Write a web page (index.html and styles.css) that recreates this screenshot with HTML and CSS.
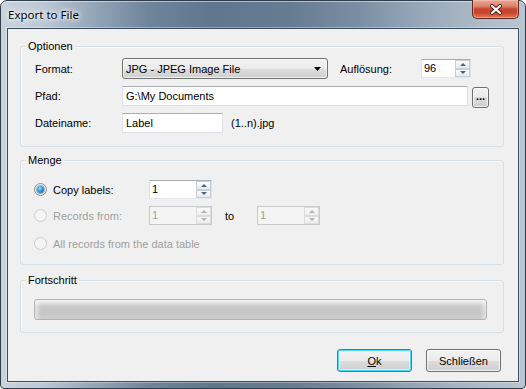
FILE: index.html
```html
<!DOCTYPE html>
<html lang="de">
<head>
    <meta charset="UTF-8">
    <title>Export to File</title>
    <link rel="stylesheet" href="styles.css">
</head>
<body>
    <div class="window">
        <div class="titlebar">
            <span class="title">Export to File</span>
            <div class="close-btn">
                <svg width="14" height="11" viewBox="0 0 14 11">
                    <path d="M3 2 L11 9 M11 2 L3 9" stroke="#5a1c12" stroke-width="4" stroke-linecap="round"/>
                    <path d="M3 2 L11 9 M11 2 L3 9" stroke="#ffffff" stroke-width="2.2" stroke-linecap="round"/>
                </svg>
            </div>
        </div>

        <div class="client">
            <!-- Optionen -->
            <div class="group group-options">
                <div class="group-title">Optionen</div>
                <div class="row row-format">
                    <span class="label">Format:</span>
                    <div class="combo">
                        <span>JPG - JPEG Image File</span>
                        <svg width="7" height="4" viewBox="0 0 7 4"><polygon points="0,0 7,0 3.5,4" fill="#000"/></svg>
                    </div>
                    <span class="label label-res">Auflösung:</span>
                    <div class="spin spin-res">
                        <span class="spin-value">96</span>
                        <div class="spin-buttons">
                            <span class="spin-btn up"></span>
                            <span class="spin-btn down"></span>
                        </div>
                    </div>
                </div>
                <div class="row row-path">
                    <span class="label">Pfad:</span>
                    <div class="textbox path-box">G:\My Documents</div>
                    <div class="browse-btn">...</div>
                </div>
                <div class="row row-name">
                    <span class="label">Dateiname:</span>
                    <div class="textbox name-box">Label</div>
                    <span class="suffix">(1..n).jpg</span>
                </div>
            </div>

            <!-- Menge -->
            <div class="group group-amount">
                <div class="group-title">Menge</div>
                <div class="row row-radio row-copy">
                    <label class="radio-label">
                        <span class="radio checked"></span>
                        <span>Copy labels:</span>
                    </label>
                    <div class="spin spin-count">
                        <span class="spin-value">1</span>
                        <div class="spin-buttons">
                            <span class="spin-btn up"></span>
                            <span class="spin-btn down"></span>
                        </div>
                    </div>
                </div>
                <div class="row row-radio row-records">
                    <label class="radio-label disabled">
                        <span class="radio"></span>
                        <span>Records from:</span>
                    </label>
                    <div class="spin spin-count disabled">
                        <span class="spin-value">1</span>
                        <div class="spin-buttons">
                            <span class="spin-btn up"></span>
                            <span class="spin-btn down"></span>
                        </div>
                    </div>
                    <span class="to-label">to</span>
                    <div class="spin spin-count disabled">
                        <span class="spin-value">1</span>
                        <div class="spin-buttons">
                            <span class="spin-btn up"></span>
                            <span class="spin-btn down"></span>
                        </div>
                    </div>
                </div>
                <div class="row row-radio row-all">
                    <label class="radio-label disabled">
                        <span class="radio"></span>
                        <span>All records from the data table</span>
                    </label>
                </div>
            </div>

            <!-- Fortschritt -->
            <div class="group group-progress">
                <div class="group-title">Fortschritt</div>
                <div class="progress"></div>
            </div>

            <div class="buttons">
                <button class="btn btn-default"><u>O</u>k</button>
                <button class="btn">Schließen</button>
            </div>
        </div>
    </div>
</body>
</html>
```

FILE: styles.css
```css
body {
    margin: 0;
    background: #ffffff;
    font-family: "Liberation Sans", Arial, sans-serif;
    font-size: 11px;
    color: #000;
}

.window {
    box-sizing: border-box;
    width: 526px;
    height: 389px;
    border: 1px solid #2f3c4a;
    border-radius: 7px 7px 4px 4px;
    padding: 0 6px 6px 6px;
    display: flex;
    flex-direction: column;
    background: linear-gradient(90deg, #c9d3dd 0%, #bcc8d4 8%, #9aabbd 16%, #6f859c 28%, #5f768e 40%, #667c93 55%, #7a8ea3 68%, #98a8b9 80%, #aebbc8 92%, #b9c5d1 100%);
    box-shadow: inset 0 1px 0 rgba(255, 255, 255, 0.5);
}

/* title bar */
.titlebar {
    height: 27px;
    display: flex;
    justify-content: space-between;
    align-items: flex-start;
}
.title {
    margin: 7px 0 0 1px;
    font-family: "Noto Sans", "Open Sans", sans-serif;
    font-size: 11.5px;
    line-height: 14px;
    color: #000;
    text-shadow: 0 0 6px #fff, 0 0 3px rgba(255, 255, 255, 0.9), 0 0 10px rgba(255, 255, 255, 0.8);
}
.close-btn {
    box-sizing: border-box;
    width: 47px;
    height: 19px;
    margin-top: -1px;
    border: 1px solid #5d2a22;
    border-top: none;
    border-radius: 0 0 5px 5px;
    background: linear-gradient(#e9a897 0%, #dc826c 35%, #c74430 50%, #c8442c 70%, #df7a55 100%);
    box-shadow: inset 0 0 0 1px rgba(255, 210, 200, 0.45);
    display: flex;
    align-items: center;
    justify-content: center;
}

/* client area */
.client {
    box-sizing: border-box;
    height: 354px;
    border: 1px solid #3a4c5f;
    background: #f0f0f0;
    box-shadow: 0 0 0 1px rgba(255, 255, 255, 0.35);
    display: flex;
    flex-direction: column;
}

.group {
    margin: 0 14px 0 12px;
    border: 1px solid #d5dfe5;
    border-radius: 3px;
    box-shadow: inset 1px 1px 0 #fafafa;
    padding: 0 0 0 14px;
}
.group-title {
    width: fit-content;
    height: 13px;
    line-height: 13px;
    margin: -7px 0 0 -9px;
    padding: 0 2px;
    background: #f0f0f0;
}
.group-options {
    margin-top: 17px;
    padding-bottom: 13px;
}
.group-amount {
    margin-top: 13px;
    padding-left: 13px;
    padding-bottom: 11px;
}
.group-progress {
    margin-top: 15px;
    padding-left: 13px;
    padding-bottom: 12px;
}
.group-amount .group-title,
.group-progress .group-title {
    margin-left: -8px;
}

.row {
    display: flex;
    align-items: center;
}
.label {
    width: 87px;
    flex-shrink: 0;
}
.row-format {
    margin-top: 5px;
    height: 21px;
}
.row-path {
    margin-top: 7px;
    height: 20px;
    align-items: flex-start;
}
.row-path .label {
    align-self: center;
}
.row-name {
    margin-top: 7px;
    height: 20px;
}

/* combo box */
.combo {
    box-sizing: border-box;
    width: 206px;
    height: 21px;
    border: 1px solid #707070;
    border-radius: 3px;
    background: linear-gradient(#f2f2f2 0%, #ebebeb 50%, #dddddd 50%, #cfcfcf 100%);
    box-shadow: inset 0 0 0 1px rgba(255, 255, 255, 0.7);
    display: flex;
    align-items: center;
    justify-content: space-between;
    padding: 0 6px 0 3px;
}
.label-res {
    width: 81px;
    margin-left: 12px;
}

/* text boxes */
.textbox {
    box-sizing: border-box;
    height: 20px;
    background: #fff;
    border: 1px solid #dbdfe6;
    border-top-color: #abadb3;
    border-left-color: #e2e3ea;
    border-right-color: #e2e3ea;
    padding: 0 3px;
    display: flex;
    align-items: center;
}
.path-box {
    width: 346px;
}
.name-box {
    width: 101px;
}
.suffix {
    margin-left: 8px;
}
.browse-btn {
    box-sizing: border-box;
    width: 17px;
    height: 21px;
    margin: 1px 0 0 4px;
    border: 1px solid #707070;
    border-radius: 3px;
    background: linear-gradient(#f2f2f2 0%, #ebebeb 50%, #dddddd 50%, #cfcfcf 100%);
    box-shadow: inset 0 0 0 1px rgba(255, 255, 255, 0.7);
    font-weight: bold;
    font-size: 11px;
    line-height: 17px;
    text-align: center;
}

/* spin boxes */
.spin {
    box-sizing: border-box;
    height: 19px;
    background: #fff;
    border: 1px solid #abadb3;
    border-left-color: #e2e3ea;
    border-right-color: #dbdfe6;
    border-bottom-color: #e3e9ef;
    display: flex;
    justify-content: space-between;
}
.spin-res {
    width: 50px;
}
.spin-count {
    width: 63px;
}
.spin-value {
    padding: 1px 0 0 2px;
    line-height: 14px;
}
.spin-buttons {
    width: 15px;
    display: flex;
    flex-direction: column;
}
.spin-btn {
    box-sizing: border-box;
    flex: 1;
    border: 1px solid #c8ced6;
    background: linear-gradient(#fdfdfd, #e6e8ec);
    display: flex;
    align-items: center;
    justify-content: center;
}
.spin-btn.up::after,
.spin-btn.down::after {
    content: "";
    width: 0;
    height: 0;
    border-left: 3px solid transparent;
    border-right: 3px solid transparent;
}
.spin-btn.up::after {
    border-bottom: 3px solid #4d6185;
}
.spin-btn.down::after {
    border-top: 3px solid #4d6185;
}
.spin.disabled {
    background: #f4f4f4;
    border-color: #c9c9c9;
    color: #a0a0a0;
}
.spin.disabled .spin-btn {
    border-color: #dcdcdc;
    background: linear-gradient(#f8f8f8, #eeeeee);
}
.spin.disabled .spin-btn.up::after {
    border-bottom-color: #b4b4b4;
}
.spin.disabled .spin-btn.down::after {
    border-top-color: #b4b4b4;
}

/* radio rows */
.row-radio {
    height: 19px;
}
.row-copy {
    margin-top: 13px;
}
.row-records {
    margin-top: 7px;
}
.row-all {
    margin-top: 9px;
}
.radio-label {
    width: 115px;
    display: flex;
    align-items: center;
}
.row-all .radio-label {
    width: auto;
}
.radio {
    box-sizing: border-box;
    width: 13px;
    height: 13px;
    margin-right: 6px;
    border-radius: 50%;
    border: 1px solid #8e8f8f;
    background: radial-gradient(circle at 50% 40%, #ffffff, #dcdcdc);
    display: flex;
    align-items: center;
    justify-content: center;
}
.radio.checked::after {
    content: "";
    width: 7px;
    height: 7px;
    border-radius: 50%;
    background: radial-gradient(circle at 40% 35%, #8fe0fb 0%, #2a9ad6 45%, #0e4f80 100%);
    box-shadow: 0 0 0 1px rgba(20, 60, 100, 0.35);
}
.radio-label.disabled {
    color: #a0a0a0;
}
.radio-label.disabled .radio {
    border-color: #cdcdcd;
    background: #f4f4f4;
}
.to-label {
    width: 32px;
    margin-left: 13px;
}

/* progress */
.progress {
    box-sizing: border-box;
    width: 453px;
    height: 21px;
    margin-top: 12px;
    border: 1px solid #b2b2b2;
    border-radius: 3px;
    background:
        linear-gradient(90deg, rgba(255, 255, 255, 0.5) 0, rgba(255, 255, 255, 0) 6px, rgba(255, 255, 255, 0) calc(100% - 6px), rgba(255, 255, 255, 0.5) 100%),
        linear-gradient(#f3f3f3 0, #dedede 18%, #c9c9c9 35%, #c6c6c6 70%, #cfcfcf 100%);
}

/* dialog buttons */
.buttons {
    display: flex;
    justify-content: flex-end;
    gap: 14px;
    margin-top: 16px;
    padding-right: 17px;
}
.btn {
    box-sizing: border-box;
    width: 75px;
    height: 23px;
    border: 1px solid #707070;
    border-radius: 3px;
    background: linear-gradient(#f2f2f2 0%, #ebebeb 50%, #dddddd 50%, #cfcfcf 100%);
    box-shadow: inset 0 0 0 1px rgba(255, 255, 255, 0.75);
    font-family: "Liberation Sans", Arial, sans-serif;
    font-size: 11px;
    color: #000;
    padding: 0;
}
.btn-default {
    border-color: #3c7fb1;
    box-shadow: inset 0 0 0 1px #48d8fb, inset 0 0 0 2px rgba(255, 255, 255, 0.5);
}
```
